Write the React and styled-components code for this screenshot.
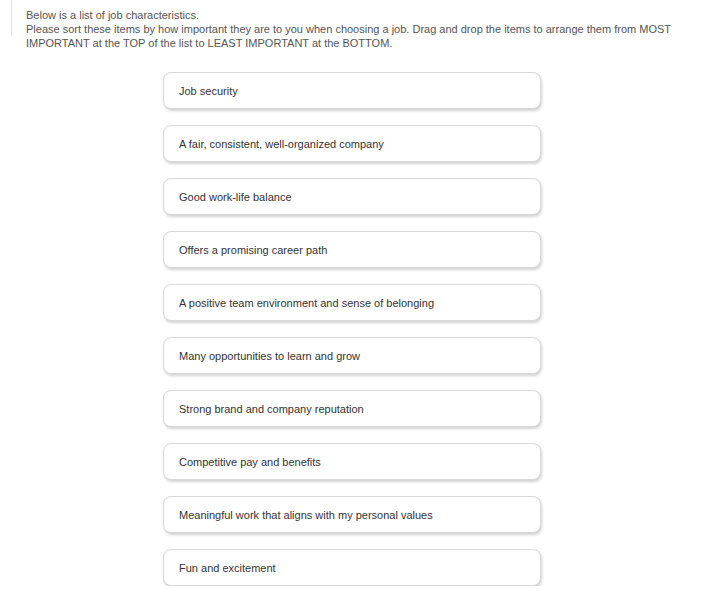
import React from "react";
import styled, { createGlobalStyle } from "styled-components";

const Global = createGlobalStyle`
  html, body { margin: 0; padding: 0; background: #fff; }
  body { font-family: Arial, "Liberation Sans", Helvetica, sans-serif; }
`;

const Page = styled.div`
  position: relative;
  padding: 8px 0 0 26px;
  &::before {
    content: "";
    position: absolute;
    left: 11px;
    top: 0;
    width: 1px;
    height: 36px;
    background: #e6e6e6;
  }
`;

const Intro = styled.div`
  width: 668px;
  font-size: 11px;
  line-height: 14px;
  color: #555;
`;

const List = styled.ul`
  list-style: none;
  margin: 22px 0 0 137px;
  padding: 0;
  display: flex;
  flex-direction: column;
  gap: 16px;
  width: 378px;
`;

const Item = styled.li`
  box-sizing: border-box;
  height: 37px;
  display: flex;
  align-items: center;
  padding: 0 15px;
  border: 1px solid #d9d9d9;
  border-radius: 8px;
  background: #fff;
  box-shadow: 1px 2px 3px rgba(0, 0, 0, 0.18);
  font-size: 11px;
  color: #333;
  cursor: move;
`;

const items = [
  "Job security",
  "A fair, consistent, well-organized company",
  "Good work-life balance",
  "Offers a promising career path",
  "A positive team environment and sense of belonging",
  "Many opportunities to learn and grow",
  "Strong brand and company reputation",
  "Competitive pay and benefits",
  "Meaningful work that aligns with my personal values",
  "Fun and excitement",
];

export default function App() {
  return (
    <>
      <Global />
      <Page>
        <Intro>
          Below is a list of job characteristics.
          <br />
          Please sort these items by how important they are to you when choosing a job. Drag and drop the items to arrange them from MOST IMPORTANT at the TOP of the list to LEAST IMPORTANT at the BOTTOM.
        </Intro>
        <List>
          {items.map((t) => (
            <Item key={t}>{t}</Item>
          ))}
        </List>
      </Page>
    </>
  );
}
